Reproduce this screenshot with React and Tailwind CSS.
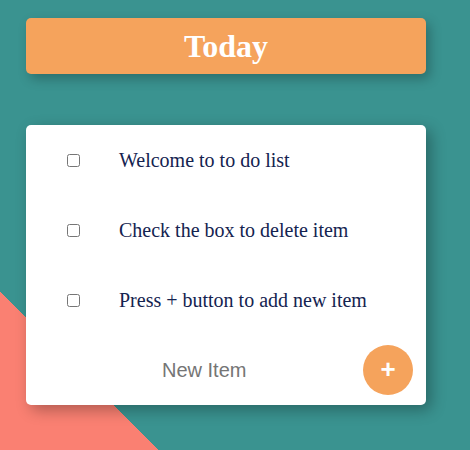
import React from 'react';

const items = ['Welcome to to do list', 'Check the box to delete item', 'Press + button to add new item'];

const App = () => {
    return (
        <div className="w-full h-[450px] overflow-hidden bg-[linear-gradient(45deg,#fa8072_112px,#3a9390_112px)] pt-[18px] pl-[26px]">
            {/* Heading */}
            <div className="w-[400px] h-[56px] bg-[#f5a35c] rounded-[5px] shadow-[4px_5px_12px_rgba(0,0,0,0.25)] flex items-center justify-center">
                <h1 className="text-white text-[32px] font-bold font-['Liberation_Serif',serif] leading-none">Today</h1>
            </div>

            {/* List card */}
            <div className="mt-[51px] w-[400px] h-[280px] bg-white rounded-[5px] shadow-[5px_5px_15px_rgba(0,0,0,0.3)]">
                {items.map((item) => (
                    <div key={item} className="h-[70px] flex items-center pl-[41px]">
                        <input type="checkbox" className="w-[13px] h-[13px] m-0" />
                        <p className="ml-[39px] text-[20px] text-[#142350] font-['Liberation_Serif',serif]">{item}</p>
                    </div>
                ))}
                <form className="h-[70px] flex items-center pl-[136px] pr-[13px]" onSubmit={(e) => e.preventDefault()}>
                    <input
                        type="text"
                        placeholder="New Item"
                        className="flex-1 min-w-0 text-[20px] font-['Liberation_Sans',sans-serif] text-[#333] placeholder:text-[#757575] outline-none bg-transparent"
                    />
                    <button className="w-[50px] h-[50px] rounded-full bg-[#f5a35c] text-white text-[26px] font-bold font-['Liberation_Sans',sans-serif] flex items-center justify-center leading-none pb-[2px]">
                        +
                    </button>
                </form>
            </div>
        </div>
    );
};

export default App;
